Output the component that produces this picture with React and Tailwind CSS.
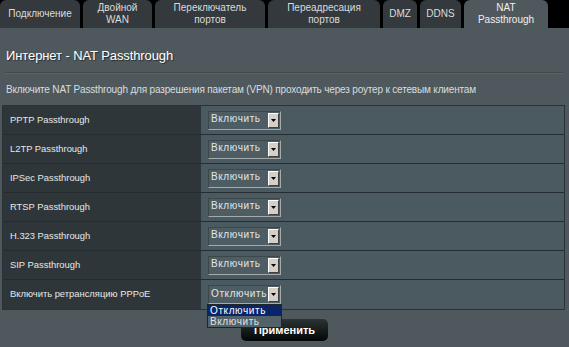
import React from "react";

const tabs = [
  { w: "w-[80px]", lines: ["Подключение"] },
  { w: "w-[69px]", lines: ["Двойной", "WAN"] },
  { w: "w-[110px]", lines: ["Переключатель", "портов"] },
  { w: "w-[112px]", lines: ["Переадресация", "портов"] },
  { w: "w-[34px]", lines: ["DMZ"] },
  { w: "w-[41px]", lines: ["DDNS"] },
  { w: "w-[84px]", lines: ["NAT", "Passthrough"], active: true },
];

const rows = [
  ["PPTP Passthrough", "Включить"],
  ["L2TP Passthrough", "Включить"],
  ["IPSec Passthrough", "Включить"],
  ["RTSP Passthrough", "Включить"],
  ["H.323 Passthrough", "Включить"],
  ["SIP Passthrough", "Включить"],
  ["Включить ретрансляцию PPPoE", "Отключить", true],
];

function Select({ value, open }) {
  return (
    <div className="relative">
      <div className="flex h-[19px] w-[73px] items-center justify-between border-t border-l border-t-[#3c474a] border-l-[#3c474a] border-b border-r border-b-[#a3abad] border-r-[#a3abad] bg-[#4e5d63] pl-[2px] pr-[1px]">
        <span className="-mt-[2px] text-[10px] leading-[12px] tracking-[0.6px] text-[#e2e6e7]">{value}</span>
        <div className="flex h-[15px] w-[11px] items-center justify-center border-t border-l border-t-white border-l-white border-b border-r border-b-[#404040] border-r-[#404040] bg-[#d4d0c8]">
          <svg width="5" height="3" viewBox="0 0 5 3"><path d="M0 0H5L2.5 3Z" fill="#000" /></svg>
        </div>
      </div>
      {open && (
        <div className="absolute left-[-1px] top-[19px] z-10 w-[75px] border border-[#202628] bg-[#536268]">
          <div className="h-[11px] bg-[#0a246a] pl-[2px] text-[10px] leading-[11px] tracking-[0.6px] text-white">Отключить</div>
          <div className="h-[11px] pl-[2px] text-[10px] leading-[11px] tracking-[0.6px] text-[#dfe3e4]">Включить</div>
        </div>
      )}
    </div>
  );
}

export default function App() {
  return (
    <div className="h-[347px] w-[569px] overflow-hidden bg-[#4f595d] font-['Liberation_Sans',Arial,sans-serif]">
      <div className="flex h-[28px] gap-[3px] bg-black">
        {tabs.map((t, i) => (
          <div
            key={i}
            className={`${t.w} flex flex-col items-center justify-center rounded-t-[6px] text-[10px] leading-[12px] ${t.active ? "bg-[#4f595d] text-[#f0f0f0]" : "bg-[#33393c] text-[#dadcdc]"}`}
          >
            {t.lines.map((l, j) => (
              <span key={j}>{l}</span>
            ))}
          </div>
        ))}
      </div>
      <div className="flex flex-col pt-[20px]">
        <div className="px-[6px] text-[13px] leading-[16px] tracking-[-0.1px] text-white [text-shadow:1px_1px_1px_rgba(0,0,0,0.5)]">Интернет - NAT Passthrough</div>
        <div className="mx-[6px] mr-[7px] mt-[8px] h-[2px] border-t border-[#3f484b] border-b border-b-[#5a6569]" />
        <div className="mt-[10px] px-[6px] text-[10px] leading-[12px] tracking-[-0.17px] text-[#d8dddf]">
          Включите NAT Passthrough для разрешения пакетам (VPN) проходить через роутер к сетевым клиентам
        </div>
        <div className="ml-[2px] mt-[9px] w-[563px] border border-[#2b3235]">
          {rows.map(([label, val, open], i) => (
            <div key={i} className={`flex h-[29px] ${i < rows.length - 1 ? "border-b border-[#262d30]" : ""}`}>
              <div className="flex w-[198px] items-center bg-[#2f3639] pl-[7px] text-[9.4px] text-[#e6e8e8]">{label}</div>
              <div className="flex flex-1 items-center bg-[#4a5a60] pl-[7px]">
                <Select value={val} open={open} />
              </div>
            </div>
          ))}
        </div>
        <div className="mt-[9px] flex justify-center">
          <div className="flex h-[22px] w-[87px] items-center justify-center rounded-[5px] bg-gradient-to-b from-[#2d3436] to-[#050707] text-[11px] font-bold text-white">
            Применить
          </div>
        </div>
      </div>
    </div>
  );
}
